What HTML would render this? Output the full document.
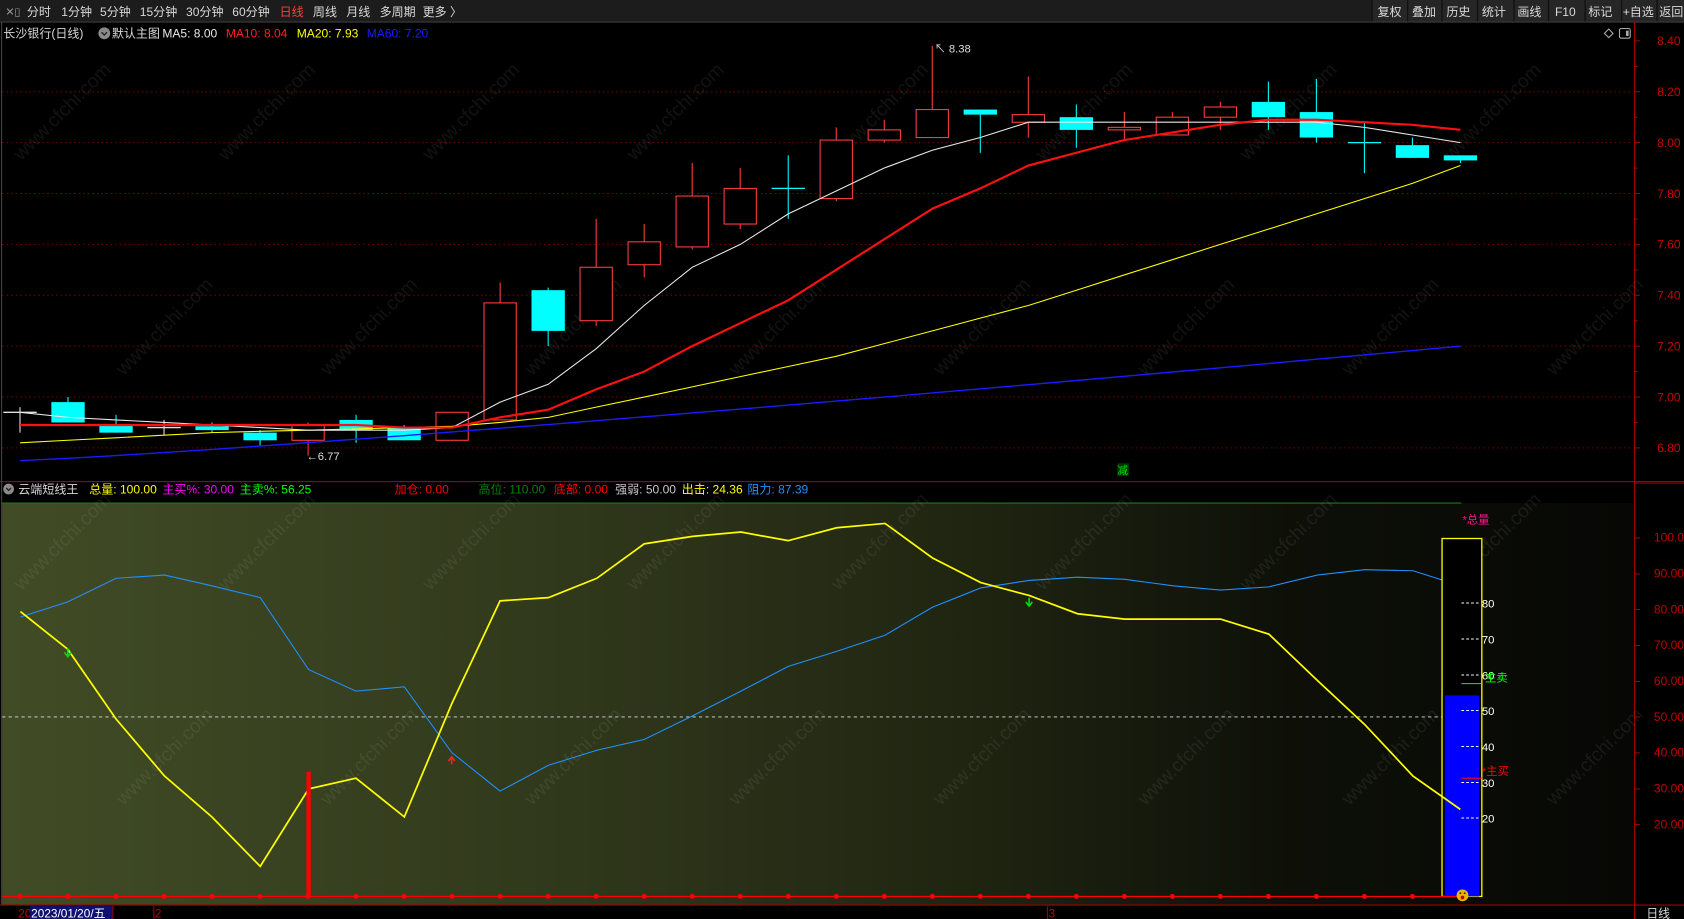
<!DOCTYPE html>
<html><head><meta charset="utf-8">
<style>
html,body{margin:0;padding:0;background:#000;overflow:hidden;}
svg{display:block;}
text{font-family:"Liberation Sans","Noto Sans CJK SC",sans-serif;}
</style></head>
<body>
<svg id="s" width="1684" height="919" viewBox="0 0 1566 855" preserveAspectRatio="none" xmlns="http://www.w3.org/2000/svg">
<defs>
<linearGradient id="bg" x1="0" x2="1" y1="0" y2="0">
<stop offset="0" stop-color="#414c26"/>
<stop offset="0.35" stop-color="#30381b"/>
<stop offset="0.6" stop-color="#1f2411"/>
<stop offset="0.8" stop-color="#0d0f08"/>
<stop offset="1" stop-color="#070805"/>
</linearGradient>
</defs>
<rect width="1566" height="855" fill="#000"/>
<rect x="0" y="0" width="1566" height="20.5" fill="#1c1c1c"/>
<line x1="0" y1="20.5" x2="1566" y2="20.5" stroke="#3a3a3a"/>
<g font-size="11.2" fill="#d8d8d8">
<text x="5" y="14.5" font-size="10" fill="#999">✕▯</text>
<text x="25" y="15">分时</text>
<text x="57" y="15">1分钟</text>
<text x="93" y="15">5分钟</text>
<text x="130" y="15">15分钟</text>
<text x="173" y="15">30分钟</text>
<text x="216" y="15">60分钟</text>
<text x="260" y="15" fill="#ff3c3c">日线</text>
<text x="291" y="15">周线</text>
<text x="322" y="15">月线</text>
<text x="353" y="15">多周期</text>
<text x="393" y="15">更多 〉</text>
</g>
<g font-size="11.2" fill="#d8d8d8">
<rect x="1276" y="0" width="290" height="20" fill="#262626"/>
<g stroke="#111" stroke-width="1.2">
<line x1="1276" y1="0" x2="1276" y2="20"/><line x1="1309" y1="0" x2="1309" y2="20"/><line x1="1341" y1="0" x2="1341" y2="20"/><line x1="1374" y1="0" x2="1374" y2="20"/><line x1="1408" y1="0" x2="1408" y2="20"/><line x1="1440" y1="0" x2="1440" y2="20"/><line x1="1474" y1="0" x2="1474" y2="20"/><line x1="1508" y1="0" x2="1508" y2="20"/><line x1="1541" y1="0" x2="1541" y2="20"/>
</g>
<text x="1281" y="15">复权</text><text x="1313" y="15">叠加</text><text x="1345" y="15">历史</text><text x="1378" y="15">统计</text><text x="1411" y="15">画线</text><text x="1446" y="15">F10</text><text x="1477" y="15">标记</text><text x="1509" y="15">+自选</text><text x="1543" y="15">返回</text>
</g>
<g font-size="11.2">
<text x="3" y="35" fill="#d8d8d8">长沙银行(日线)</text>
<circle cx="97" cy="31" r="5.5" fill="#8a8a8a"/><path d="M94.5 30 L97 32.5 L99.5 30" stroke="#222" stroke-width="1.3" fill="none"/>
<text x="104" y="35" fill="#d8d8d8">默认主图</text>
<text x="151" y="35" fill="#e8e8e8">MA5: 8.00</text>
<text x="210" y="35" fill="#ff2020">MA10: 8.04</text>
<text x="276" y="35" fill="#ffff00">MA20: 7.93</text>
<text x="341" y="35" fill="#1a1aff">MA60: 7.20</text>
</g>
<path d="M1496 27 l4 4 -4 4 -4 -4z" stroke="#aaa" fill="none"/>
<rect x="1506" y="26.5" width="10" height="9" rx="1.5" stroke="#aaa" fill="none"/><rect x="1512" y="28.5" width="2.5" height="5" fill="#aaa"/>
<g id="grid" stroke="#8a0000" stroke-dasharray="1.2 3" stroke-width="0.9"></g>
<line x1="1520" y1="20.5" x2="1520" y2="855" stroke="#a00000" stroke-width="1.1"/>
<line x1="0" y1="448" x2="1566" y2="448" stroke="#a00000" stroke-width="1"/>
<line x1="1520" y1="449.5" x2="1566" y2="449.5" stroke="#a00000" stroke-width="1"/>
<line x1="1.5" y1="20.5" x2="1.5" y2="842" stroke="#444"/>
<g id="axis" font-size="11.2" fill="#c80000"></g>
<rect x="2" y="468" width="1517" height="374" fill="url(#bg)"/>
<line x1="2" y1="468" x2="1359" y2="468" stroke="#1a7a1a" stroke-width="1"/>
<line x1="0" y1="842" x2="1566" y2="842" stroke="#a00000" stroke-width="1"/>
<g font-size="11.2">
<circle cx="8" cy="455" r="5" fill="#8a8a8a"/><path d="M5.8 454 L8 456.3 L10.2 454" stroke="#222" stroke-width="1.2" fill="none"/>
<text x="17" y="459" fill="#d8d8d8">云端短线王</text>
<text x="83" y="459" fill="#ffff00">总量: 100.00</text>
<text x="151" y="459" fill="#ff00ff">主买%: 30.00</text>
<text x="223" y="459" fill="#00ff00">主卖%: 56.25</text>
<text x="367" y="459" fill="#ff0000">加仓: 0.00</text>
<text x="445" y="459" fill="#008000">高位: 110.00</text>
<text x="515" y="459" fill="#ff0000">底部: 0.00</text>
<text x="572" y="459" fill="#c8c8c8">强弱: 50.00</text>
<text x="634" y="459" fill="#ffff00">出击: 24.36</text>
<text x="695" y="459" fill="#1e90ff">阻力: 87.39</text>
</g>
<g id="wm" font-size="18" fill="#ffffff" fill-opacity="0.07"></g>
<g id="plot"></g>
<line x1="2" y1="667" x2="1355" y2="667" stroke="#ddd" stroke-dasharray="3 3" stroke-width="0.8"/>
<polyline fill="none" stroke="#1e90ff" stroke-width="1" points="19,574 63,560 108,538 153,535 197,545 242,556 287,623 331,643 376,639 420,700 465,736 510,712 555,698 599,688 644,666 689,643 733,620 778,606 823,591 867,565 912,547 957,540 1002,537 1046,539 1091,545 1135,549 1180,546 1225,535 1269,530 1314,531 1358,545"/>
<rect x="1341" y="501" width="37" height="333" fill="#000" stroke="#ffff00" stroke-width="1.2"/>
<rect x="1343.5" y="647" width="32" height="187" fill="#0000ff"/>
<polyline fill="none" stroke="#ffff00" stroke-width="1.6" points="19,569 63,604 108,669 153,722 197,760 242,806 287,734 331,724 376,760 420,655 465,559 510,556 555,538 599,506 644,499 689,495 733,503 778,491 823,487 867,519 912,542 957,554 1002,571 1046,576 1091,576 1135,576 1180,590 1225,633 1269,674 1314,722 1358,753"/>
<g stroke="#fff" stroke-dasharray="2.5 2" stroke-width="0.9">
<line x1="1359" y1="561" x2="1377" y2="561"/><line x1="1359" y1="594.5" x2="1377" y2="594.5"/><line x1="1359" y1="628" x2="1377" y2="628"/><line x1="1359" y1="661" x2="1377" y2="661"/><line x1="1359" y1="694.5" x2="1377" y2="694.5"/><line x1="1359" y1="728" x2="1377" y2="728"/><line x1="1359" y1="761" x2="1377" y2="761"/>
</g>
<g font-size="10.5" fill="#fff">
<text x="1378" y="565">80</text><text x="1378" y="598.5">70</text><text x="1378" y="632">60</text><text x="1378" y="665">50</text><text x="1378" y="698.5">40</text><text x="1378" y="732">30</text><text x="1378" y="765">20</text>
</g>
<line x1="1359" y1="636" x2="1378" y2="636" stroke="#00ff00" stroke-width="1"/>
<text x="1381" y="634" font-size="10.5" fill="#00ff00">主卖</text>
<line x1="1359" y1="724" x2="1378" y2="724" stroke="#ff0000" stroke-width="1"/>
<text x="1378" y="721" font-size="10.5" fill="#ff0000">*主买</text>
<text x="1360" y="487" font-size="10.5" fill="#ff1493">*总量</text>
<line x1="2" y1="834" x2="1360" y2="834" stroke="#ff0000" stroke-width="1"/>
<rect x="285" y="718" width="4" height="116" fill="#ff0000"/>
<g id="dots" fill="#ff0000"></g>
<circle cx="1360" cy="833" r="5.5" fill="#e8b800"/><circle cx="1358" cy="831" r="0.9" fill="#402000"/><circle cx="1362" cy="831" r="0.9" fill="#402000"/><circle cx="1360" cy="835" r="1.7" fill="#c00000"/>
<path d="M63 603 v7 M60 607 l3 4 3-4" stroke="#00dd00" stroke-width="1.5" fill="none"/>
<path d="M957 556 v7 M954 560 l3 4 3-4" stroke="#00dd00" stroke-width="1.5" fill="none"/>
<path d="M420 711 v-7 M417 708 l3-4 3 4" stroke="#ff2020" stroke-width="1.5" fill="none"/>
<g font-size="11.2" fill="#c00000">
<text x="1538" y="504">100.0</text><text x="1538" y="537.5">90.00</text><text x="1538" y="571">80.00</text><text x="1538" y="604">70.00</text><text x="1538" y="637.5">60.00</text><text x="1538" y="671">50.00</text><text x="1538" y="704">40.00</text><text x="1538" y="737.5">30.00</text><text x="1538" y="771">20.00</text>
</g>
<g stroke="#a00000"><line x1="1520" y1="500.5" x2="1525" y2="500.5"/><line x1="1520" y1="534" x2="1525" y2="534"/><line x1="1520" y1="567" x2="1525" y2="567"/><line x1="1520" y1="600.5" x2="1525" y2="600.5"/><line x1="1520" y1="634" x2="1525" y2="634"/><line x1="1520" y1="667" x2="1525" y2="667"/><line x1="1520" y1="700.5" x2="1525" y2="700.5"/><line x1="1520" y1="734" x2="1525" y2="734"/><line x1="1520" y1="767" x2="1525" y2="767"/></g>
<text x="17" y="853.5" font-size="11" fill="#c00000">20</text>
<rect x="28" y="843" width="77" height="12" fill="#101070"/>
<text x="29" y="853.5" font-size="11" fill="#fff">2023/01/20/五</text>
<line x1="105" y1="843" x2="105" y2="855" stroke="#a00000"/>
<line x1="143" y1="843" x2="143" y2="855" stroke="#a00000"/>
<text x="144" y="853.5" font-size="11" fill="#c00000">2</text>
<line x1="974" y1="843" x2="974" y2="855" stroke="#a00000"/>
<text x="975" y="853.5" font-size="11" fill="#c00000">3</text>
<text x="1531" y="853.5" font-size="11" fill="#d8d8d8">日线</text>
<text x="285" y="428" font-size="10.5" fill="#ddd">←6.77</text>
<text x="869" y="49" font-size="10.5" fill="#ddd">↖ 8.38</text>
<rect x="1039" y="431" width="11" height="12" fill="#003300"/>
<text x="1039" y="441" font-size="10" fill="#00dd00">减</text>
</svg>
<script>
(function(){
var NS="http://www.w3.org/2000/svg";
function el(t,a,p){var e=document.createElementNS(NS,t);for(var k in a)e.setAttribute(k,a[k]);(p||document.getElementById('plot')).appendChild(e);return e;}
function Y(p){return 38+(8.40-p)*236.7;}
function X(i){return 18.6+44.65*i;}
var grid=document.getElementById('grid'),axis=document.getElementById('axis');
var labs=['8.40','8.20','8.00','7.80','7.60','7.40','7.20','7.00','6.80'];
for(var k=0;k<labs.length;k++){var p=parseFloat(labs[k]),y=Y(p);
 if(k>0)el('line',{x1:2,y1:y,x2:1518,y2:y},grid);
 el('line',{x1:1520,y1:y,x2:1525,y2:y,stroke:'#a00000'},axis);
 el('line',{x1:1520,y1:y-23.6,x2:1523,y2:y-23.6,stroke:'#a00000'},axis);
 var t=el('text',{x:1541,y:y+4},axis);t.textContent=labs[k];}
var wm=document.getElementById('wm');
for(var r=0;r<4;r++)for(var c=0;c<8;c++){var x=20+c*190+(r%2)*95,y=150+r*200;
 var t=el('text',{x:x,y:y,transform:'rotate(-45 '+x+' '+y+')'},wm);t.textContent='www.cfchi.com';}
var d=[[6.94,6.94,6.96,6.86],[6.98,6.90,7.00,6.90],[6.89,6.86,6.93,6.86],[6.88,6.88,6.91,6.85],[6.885,6.87,6.90,6.86],[6.86,6.83,6.87,6.81],[6.83,6.89,6.90,6.77],[6.91,6.87,6.93,6.82],[6.88,6.83,6.89,6.83],[6.83,6.94,6.94,6.83],[6.91,7.37,7.45,6.91],[7.42,7.26,7.43,7.20],[7.30,7.51,7.70,7.28],[7.52,7.61,7.68,7.47],[7.59,7.79,7.92,7.58],[7.68,7.82,7.90,7.66],[7.82,7.82,7.95,7.70],[7.78,8.01,8.06,7.77],[8.01,8.05,8.09,8.00],[8.02,8.13,8.38,8.02],[8.13,8.11,8.13,7.96],[8.08,8.11,8.26,8.02],[8.10,8.05,8.15,7.98],[8.05,8.06,8.12,8.01],[8.03,8.10,8.12,8.03],[8.10,8.14,8.16,8.05],[8.16,8.10,8.24,8.05],[8.12,8.02,8.25,8.00],[8.00,8.00,8.08,7.88],[7.99,7.94,8.02,7.94],[7.95,7.93,7.95,7.92]];
for(var i=0;i<d.length;i++){var o=d[i][0],c=d[i][1],h=d[i][2],l=d[i][3],x=X(i),w=31;
 var up=c>o, col=up?'#ff3c3c':'#00ffff';
 if(i==0||i==3)col='#e0e0e0';
 var top=Y(Math.max(o,c)),bot=Y(Math.min(o,c));
 if(Math.abs(o-c)<0.003){el('line',{x1:x,y1:Y(h),x2:x,y2:Y(l),stroke:col,'stroke-width':1});el('line',{x1:x-w/2,y1:top,x2:x+w/2,y2:top,stroke:col,'stroke-width':1.2});continue;}
 if(up){el('line',{x1:x,y1:Y(h),x2:x,y2:top,stroke:col});el('line',{x1:x,y1:bot,x2:x,y2:Y(l),stroke:col});
  el('rect',{x:x-w/2+0.5,y:top,width:w-1,height:Math.max(bot-top,1),fill:'#000',stroke:col,'stroke-width':1});}
 else{el('line',{x1:x,y1:Y(h),x2:x,y2:Y(l),stroke:col});el('rect',{x:x-w/2,y:top,width:w,height:Math.max(bot-top,1.5),fill:col});}
}
function line(arr,col,sw){var pts=[];for(var i=0;i<arr.length;i++)pts.push(X(i).toFixed(1)+','+Y(arr[i]).toFixed(1));el('polyline',{points:pts.join(' '),fill:'none',stroke:col,'stroke-width':sw});}
var ma60=[];
for(var i=0;i<31;i++){ma60.push(6.75+0.45*Math.pow(i/30,1.15));}
var m20=[6.82,6.83,6.84,6.85,6.86,6.865,6.87,6.875,6.88,6.885,6.90,6.92,6.96,7.00,7.04,7.08,7.12,7.16,7.21,7.26,7.31,7.36,7.42,7.48,7.54,7.60,7.66,7.72,7.78,7.84,7.91];
line(ma60,'#1a1aff',1.3);
line(m20,'#ffff00',1);
var m10=[6.89,6.89,6.89,6.89,6.89,6.89,6.89,6.89,6.88,6.88,6.92,6.95,7.03,7.10,7.20,7.29,7.38,7.50,7.62,7.74,7.82,7.91,7.96,8.01,8.04,8.07,8.09,8.09,8.08,8.07,8.05];
var m5=[6.94,6.92,6.91,6.90,6.89,6.88,6.87,6.87,6.87,6.88,6.98,7.05,7.19,7.36,7.51,7.60,7.72,7.81,7.90,7.97,8.02,8.08,8.08,8.08,8.08,8.08,8.08,8.08,8.06,8.03,8.00];
line(m5,'#e8e8e8',1);
line(m10,'#ff1010',2);
var dots=document.getElementById('dots');
for(var i=0;i<31;i++)el('circle',{cx:X(i),cy:834,r:2.3},dots);
})();
</script>
</body></html>
